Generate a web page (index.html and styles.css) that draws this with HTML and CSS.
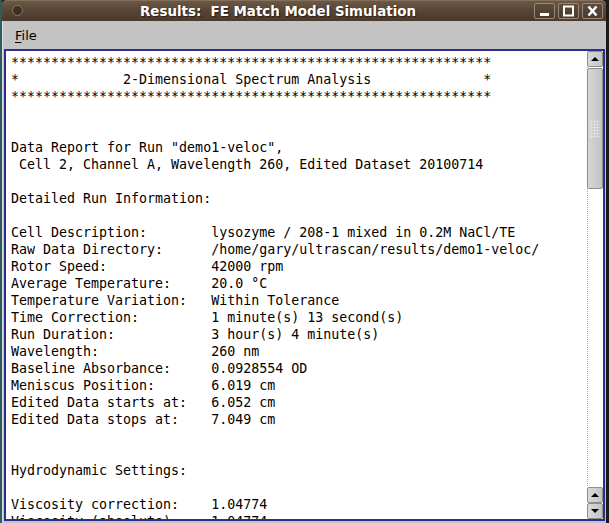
FILE: index.html
```html
<!DOCTYPE html>
<html>
<head>
<meta charset="utf-8">
<link rel="stylesheet" href="styles.css">
</head>
<body>
<div class="window">
  <div class="titlebar">
    <span class="winmenu"></span>
    <span class="title">Results:&nbsp; FE Match Model Simulation</span>
    <div class="wbtns">
      <span class="wbtn"><svg width="21" height="16" viewBox="0 0 21 16"><rect x="6" y="10" width="9" height="3" fill="#fff"/></svg></span>
      <span class="wbtn"><svg width="21" height="16" viewBox="0 0 21 16"><rect x="6" y="3.5" width="9" height="9" fill="none" stroke="#fff" stroke-width="2"/></svg></span>
      <span class="wbtn"><svg width="21" height="16" viewBox="0 0 21 16"><path d="M6.5 3.5 L14.5 12.5 M14.5 3.5 L6.5 12.5" stroke="#fff" stroke-width="2.6"/></svg></span>
    </div>
  </div>
  <div class="menubar"><span class="menuitem"><u>F</u>ile</span></div>
  <div class="client">
    <div class="textbox">
      <pre class="text">************************************************************
*             2-Dimensional Spectrum Analysis              *
************************************************************


Data Report for Run "demo1-veloc",
 Cell 2, Channel A, Wavelength 260, Edited Dataset 20100714

Detailed Run Information:

Cell Description:        lysozyme / 208-1 mixed in 0.2M NaCl/TE
Raw Data Directory:      /home/gary/ultrascan/results/demo1-veloc/
Rotor Speed:             42000 rpm
Average Temperature:     20.0 °C
Temperature Variation:   Within Tolerance
Time Correction:         1 minute(s) 13 second(s)
Run Duration:            3 hour(s) 4 minute(s)
Wavelength:              260 nm
Baseline Absorbance:     0.0928554 OD
Meniscus Position:       6.019 cm
Edited Data starts at:   6.052 cm
Edited Data stops at:    7.049 cm


Hydrodynamic Settings:

Viscosity correction:    1.04774
Viscosity (absolute):    1.04774</pre>
      <div class="scrollbar">
        <div class="sbtn"><svg width="14" height="14" viewBox="0 0 14 14"><path d="M3 9 L7 5 L11 9 Z" fill="#000"/></svg></div>
        <div class="track">
          <div class="thumb"><div class="grip"></div></div>
        </div>
        <div class="sbtn"><svg width="14" height="14" viewBox="0 0 14 14"><path d="M3 9 L7 5 L11 9 Z" fill="#000"/></svg></div>
        <div class="sbtn"><svg width="14" height="14" viewBox="0 0 14 14"><path d="M3 5 L7 9 L11 5 Z" fill="#000"/></svg></div>
      </div>
    </div>
  </div>
</div>
</body>
</html>
```
FILE: styles.css
```css
html, body {
  margin: 0;
  padding: 0;
}
body {
  width: 609px;
  height: 523px;
  overflow: hidden;
  background: linear-gradient(to right, #2c5c5c 0 2px, #1b1b1b 2px);
}
.window {
  margin-left: 2px;
  width: 604px;
  height: 523px;
  display: flex;
  flex-direction: column;
}
.titlebar {
  height: 21px;
  flex: none;
  display: flex;
  align-items: center;
  position: relative;
  background: linear-gradient(#6e5a49, #574535 50%, #4a3a2d);
  border-radius: 5px 5px 0 0;
  box-shadow: inset 0 1px 0 #85705d;
}
.winmenu {
  position: absolute;
  left: 10px;
  top: 5px;
  width: 9px;
  height: 9px;
  border-radius: 50%;
  background: #3c2f25;
  border: 1px solid #8c7867;
}
.title {
  flex: 1;
  text-align: center;
  font-family: "DejaVu Sans", sans-serif;
  font-weight: bold;
  font-size: 13.4px;
  color: #fff;
  text-shadow: 1px 1px 1px #2a1e15;
  padding-left: 20px;
  padding-top: 1px;
}
.wbtns {
  display: flex;
  gap: 3px;
  margin-right: 3px;
  padding-top: 1px;
}
.wbtn {
  width: 21px;
  height: 16px;
  box-sizing: border-box;
  border: 1px solid #9a8777;
  border-radius: 2px;
  background: linear-gradient(#5e4b3c, #4a3a2e);
  display: flex;
}
.wbtn svg {
  margin: -1px;
}
.menubar {
  height: 27px;
  flex: none;
  background: #c3c3c3;
  border-left: 1px solid #dedede;
  display: flex;
  align-items: center;
  padding-left: 12px;
  box-sizing: border-box;
}
.menuitem {
  font-family: "DejaVu Sans", sans-serif;
  font-size: 13px;
  color: #000;
  padding-top: 1px;
}
.menuitem u {
  text-underline-offset: 2px;
}
.client {
  flex: 1;
  background: #c3c3c3;
  border-left: 1px solid #dedede;
  padding: 1px 1px 2px 1px;
  display: flex;
  min-height: 0;
}
.textbox {
  flex: 1;
  display: flex;
  border: 2px solid #2e2e8e;
  background: #fff;
  min-height: 0;
}
.text {
  flex: 1;
  margin: 0;
  padding: 3px 5px 0 5px;
  font-family: "DejaVu Sans Mono", monospace;
  font-size: 13.3px;
  line-height: 17px;
  color: #000;
  overflow: hidden;
  white-space: pre;
}
.scrollbar {
  width: 16px;
  flex: none;
  display: flex;
  flex-direction: column;
  background: #fff;
}
.sbtn {
  height: 16px;
  flex: none;
  box-sizing: border-box;
  border: 1px solid #8d8d8d;
  border-radius: 2px;
  background: linear-gradient(to right, #dadada, #c4c4c4);
  display: flex;
  align-items: center;
  justify-content: center;
}
.track {
  flex: 1;
  border-left: 1px dotted #a8a8a8;
  display: flex;
  flex-direction: column;
  padding-top: 1px;
  margin-bottom: 1px;
}
.thumb {
  height: 121px;
  margin-left: -1px;
  box-sizing: border-box;
  border: 1px solid #8d8d8d;
  border-radius: 2px;
  background: linear-gradient(to right, #d6d6d6, #c2c2c2);
  display: flex;
  align-items: center;
  justify-content: center;
}
.grip {
  width: 10px;
  height: 18px;
  background-image: radial-gradient(circle, #e8e8e8 0.8px, transparent 1.2px);
  background-size: 3px 3px;
}
```
